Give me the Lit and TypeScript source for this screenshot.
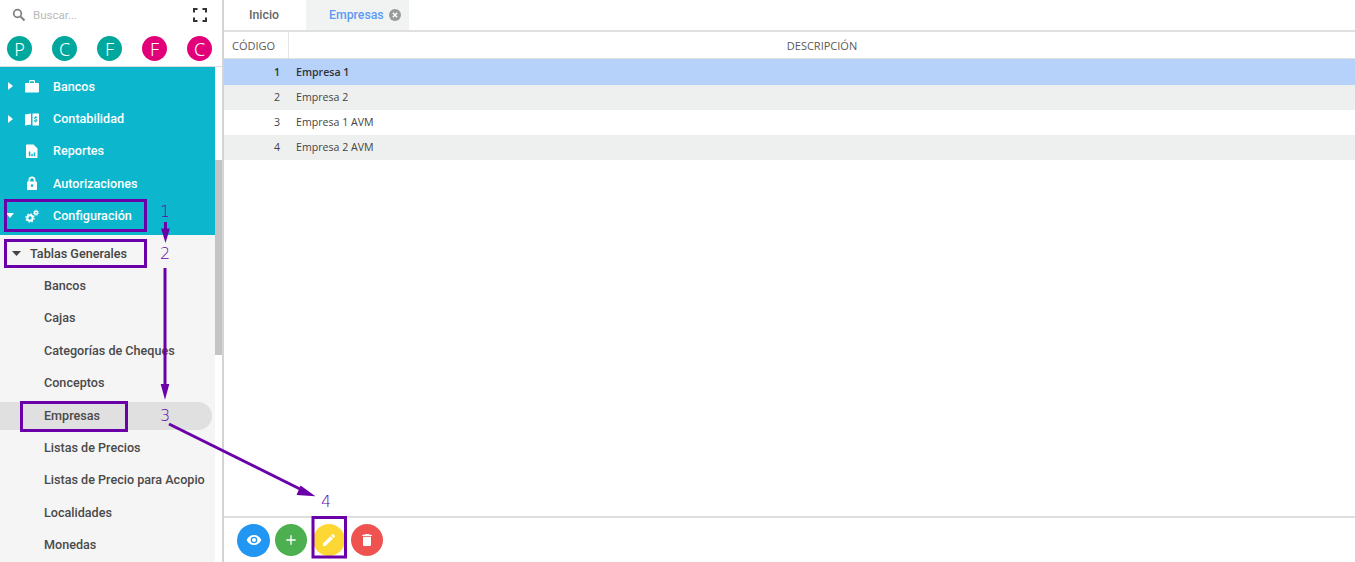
import { LitElement, html, css, svg } from "lit";
import { customElement } from "lit/decorators.js";

const bag = svg`<path d="M2 5h3V3.400C5 2.600 5.600 2 6.400 2h3.200c.8 0 1.400.6 1.400 1.400V5h3c.6 0 1 .4 1 1v7.500c0 .6-.4 1-1 1H2c-.6 0-1-.4-1-1V6c0-.6.400-1 1-1zm4.200-1.800V5h3.600V3.200z" fill-rule="evenodd"/>`;
const book = svg`<path d="M1 3.500 7 2.500v11l-6 1zM8.500 2.500H15v12H8.500zM11.300 5v1c-.8.2-1.200.7-1.200 1.300 0 1.600 2.400 1 2.400 1.800 0 .3-.4.500-.9.500s-1-.2-1.300-.5l-.4.800c.3.300.8.500 1.400.6v1h1v-1c.8-.2 1.200-.7 1.200-1.300 0-1.600-2.400-1.100-2.400-1.800 0-.3.300-.5.800-.5.400 0 .8.100 1.100.4l.4-.8c-.3-.2-.7-.4-1.100-.5V5z" fill-rule="evenodd"/>`;
const report = svg`<path d="M3 1.500h6.500L13.500 5.500V14c0 .6-.4 1-1 1H3c-.6 0-1-.4-1-1V2.500c0-.6.400-1 1-1zM4.800 8.500v4.700h1.500V8.500zm2.500 2.300v2.400h1.500v-2.400zm2.400-1.200v3.600h1.500V9.600z" fill-rule="evenodd"/>`;
const lock = svg`<path d="M4.500 6.500V5a3.500 3.500 0 0 1 7 0v1.500h.5c.6 0 1 .4 1 1V14c0 .6-.4 1-1 1H4c-.6 0-1-.4-1-1V7.500c0-.6.400-1 1-1zm1.700 0h3.600V5a1.800 1.800 0 0 0-3.600 0zM8 9.300a1.300 1.300 0 1 0 0 2.600 1.300 1.300 0 0 0 0-2.600z" fill-rule="evenodd"/>`;
const gears = svg`<g><circle cx="6" cy="10" r="2.700" fill="none" stroke="#fff" stroke-width="2"/><circle cx="6" cy="10" r="4.100" fill="none" stroke="#fff" stroke-width="1.200" stroke-dasharray="1.600 1.620"/><circle cx="12" cy="4.800" r="1.500" fill="none" stroke="#fff" stroke-width="1.400"/><circle cx="12" cy="4.800" r="2.600" fill="none" stroke="#fff" stroke-width=".9" stroke-dasharray="1.100 1.180"/></g>`;

interface Item { label: string; icon: unknown; arrow?: "r" | "d"; }
const teal: Item[] = [
  { label: "Bancos", icon: bag, arrow: "r" },
  { label: "Contabilidad", icon: book, arrow: "r" },
  { label: "Reportes", icon: report },
  { label: "Autorizaciones", icon: lock },
  { label: "Configuración", icon: gears, arrow: "d" },
];
const subs = ["Bancos", "Cajas", "Categorías de Cheques", "Conceptos", "Empresas", "Listas de Precios", "Listas de Precio para Acopio", "Localidades", "Monedas"];
const avatars = [["P", "t"], ["C", "t"], ["F", "t"], ["F", "p"], ["C", "p"]];
const rows = [["1", "Empresa 1"], ["2", "Empresa 2"], ["3", "Empresa 1 AVM"], ["4", "Empresa 2 AVM"]];

@customElement("app-root")
export class AppRoot extends LitElement {
  static styles = css`
    :host { display: block; position: relative; width: 1355px; height: 562px; overflow: hidden; background: #fff; font-family: Roboto, sans-serif; }
    .page { display: flex; height: 562px; }
    .side { width: 224px; flex: none; border-right: 2px solid #d4d4d4; box-sizing: border-box; display: flex; flex-direction: column; position: relative; overflow: hidden; background: #fff; }
    .search { height: 30px; display: flex; align-items: center; padding: 0 15px 0 12px; flex: none; }
    .search .ph { margin-left: 7px; font-size: 11.500px; color: #b9b9b9; flex: 1; }
    .avatars { height: 37px; flex: none; display: flex; justify-content: space-between; padding: 6px 10px 0 7px; box-sizing: border-box; border-bottom: 1px solid #dcdcdc; }
    .av { width: 25px; height: 25px; border-radius: 50%; color: #fff; font-size: 18px; display: flex; align-items: center; justify-content: center; font-family: "Noto Sans", sans-serif; font-weight: 300; line-height: 1; }
    .av.t { background: #00a79d; }
    .av.p { background: #e2007a; }
    .scroller { flex: 1; display: flex; min-height: 0; }
    .menu { width: 215px; flex: none; display: flex; flex-direction: column; background: #f5f5f5; }
    .tealbox { background: #0cb7cd; padding: 3px 0 3.500px; height: 168px; box-sizing: border-box; flex: none; }
    .row { height: 32.400px; display: flex; align-items: center; font-size: 12.600px; font-weight: 500; position: relative; }
    .tealbox .row { color: #fff; }
    .tealbox .ar { width: 10px; margin-left: 5px; height: 10px; display: flex; align-items: center; justify-content: center; flex: none; }
    .tealbox .ic { margin-left: 9px; width: 16px; height: 16px; flex: none; fill: #fff; }
    .tealbox .lb { margin-left: 13px; }
    .sub { padding-top: 1.200px; }
    .sub .head { color: #444; padding-left: 12px; padding-top: 1px; box-sizing: border-box; height: 33px; }
    .sub .head .lb { margin-left: 9px; }
    .sub .it { padding-left: 44px; color: #4a4a4a; height: 32.400px; }
    .sub .it.on { background: #e0e0e0; border-radius: 0 14px 14px 0; margin-right: 3px; height: 28px; margin-top: 3.200px; margin-bottom: 1.200px; }
    .track { width: 7px; flex: none; background: #fff; display: flex; flex-direction: column; }
    .thumb { width: 7px; height: 195px; margin-top: 93px; background: #c4c4c4; }
    .main { flex: 1; display: flex; flex-direction: column; min-width: 0; }
    .tabs { height: 30px; flex: none; display: flex; border-bottom: 2px solid #e0e0e0; font-size: 12.300px; font-weight: 500; }
    .tab { display: flex; align-items: center; color: #666; }
    .tab.a { width: 82px; padding-left: 25px; box-sizing: border-box; }
    .tab.b { width: 103px; background: #f1f3f3; color: #5c9bf5; padding-left: 23px; box-sizing: border-box; gap: 5px; }
    .x { width: 12px; height: 12px; display: block; }
    .grid { flex: 1; min-height: 0; font-family: "Open Sans", "Noto Sans", sans-serif; font-size: 10.600px; color: #444; }
    .g-head { height: 26px; display: flex; border-bottom: 1px solid #e0e0e0; color: #5a5a5a; font-size: 11px; }
    .g-head .c { width: 65px; box-sizing: border-box; border-right: 1px solid #e6e6e6; display: flex; align-items: center; padding-left: 8px; }
    .g-head .d { flex: 1; display: flex; align-items: center; justify-content: center; }
    .g-row { height: 25px; box-sizing: border-box; padding-bottom: 1px; display: flex; align-items: center; }
    .g-row:nth-child(even) { background: #eef0ef; }
    .g-row.sel { background: #b6d1fa; font-weight: 600; color: #333; height: 26px; padding-bottom: 0; }
    .g-row .n { width: 56px; text-align: right; flex: none; }
    .g-row .t { margin-left: 16px; }
    .bar { height: 46px; box-sizing: border-box; flex: none; border-top: 2px solid #dedede; display: flex; align-items: center; padding-left: 13px; }
    .fab { width: 32px; height: 32px; border-radius: 50%; display: flex; align-items: center; justify-content: center; flex: none; }
    .fab svg { width: 16px; height: 16px; fill: #fff; }
    .fab.blue { background: #2196f3; width: 33px; height: 33px; margin-right: 5px; }
    .fab.green { background: #4caf50; margin-right: 6px; }
    .fab.yellow { background: #fdd835; margin-right: 6px; }
    .fab.red { background: #ef5350; }
    .over { position: absolute; left: 0; top: 0; width: 1355px; height: 562px; pointer-events: none; }
    .over text { font-family: "DejaVu Sans", sans-serif; font-size: 16px; fill: #6a00a8; font-weight: 200; }
  `;

  render() {
    return html`
      <div class="page">
        <aside class="side">
          <div class="search">
            <svg width="14" height="14" viewBox="0 0 14 14" fill="none" stroke="#808080" stroke-width="1.700"><circle cx="5.500" cy="5.500" r="3.800"/><path d="M8.500 8.500l4 4" stroke-width="2"/></svg>
            <span class="ph">Buscar...</span>
            <svg width="14" height="14" viewBox="0 0 14 14" fill="none" stroke="#333" stroke-width="2"><path d="M1 4.500V1h3.500M9.500 1H13v3.500M13 9.500V13H9.500M4.500 13H1V9.500"/></svg>
          </div>
          <div class="avatars">
            ${avatars.map(([l, c]) => html`<div class="av ${c}">${l}</div>`)}
          </div>
          <div class="scroller">
            <nav class="menu">
              <div class="tealbox">
                ${teal.map((i) => html`
                  <div class="row">
                    <span class="ar">
                      ${i.arrow === "r"
                        ? html`<svg width="5" height="8" viewBox="0 0 5 8"><path d="M0 0l5 4-5 4z" fill="#fff"/></svg>`
                        : i.arrow === "d"
                          ? html`<svg width="8" height="5" viewBox="0 0 8 5"><path d="M0 0h8L4 5z" fill="#fff"/></svg>`
                          : ""}
                    </span>
                    <svg class="ic" viewBox="0 0 16 16">${i.icon}</svg>
                    <span class="lb">${i.label}</span>
                  </div>`)}
              </div>
              <div class="sub">
                <div class="row head">
                  <svg width="9" height="5" viewBox="0 0 9 5"><path d="M0 0h9L4.500 5z" fill="#444"/></svg>
                  <span class="lb">Tablas Generales</span>
                </div>
                ${subs.map((s) => html`<div class="row it ${s === "Empresas" ? "on" : ""}">${s}</div>`)}
              </div>
            </nav>
            <div class="track"><div class="thumb"></div></div>
          </div>
        </aside>
        <main class="main">
          <div class="tabs">
            <div class="tab a">Inicio</div>
            <div class="tab b">Empresas
              <svg class="x" viewBox="0 0 12 12"><circle cx="6" cy="6" r="6" fill="#9a9a9a"/><path d="M3.800 3.800l4.400 4.400M8.200 3.800l-4.400 4.400" stroke="#fff" stroke-width="1.400"/></svg>
            </div>
          </div>
          <div class="grid">
            <div class="g-head"><div class="c">CÓDIGO</div><div class="d">DESCRIPCIÓN</div></div>
            <div>
              ${rows.map((r, i) => html`<div class="g-row ${i === 0 ? "sel" : ""}"><span class="n">${r[0]}</span><span class="t">${r[1]}</span></div>`)}
            </div>
          </div>
          <div class="bar">
            <div class="fab blue"><svg viewBox="0 0 24 24"><path d="M12 4.500C7 4.500 2.700 7.600 1 12c1.700 4.400 6 7.500 11 7.500s9.300-3.100 11-7.500c-1.700-4.400-6-7.500-11-7.500zM12 17a5 5 0 1 1 0-10 5 5 0 0 1 0 10zm0-8a3 3 0 1 0 0 6 3 3 0 0 0 0-6z"/></svg></div>
            <div class="fab green"><svg viewBox="0 0 24 24"><path d="M19 13h-6v6h-2v-6H5v-2h6V5h2v6h6z"/></svg></div>
            <div class="fab yellow"><svg viewBox="0 0 24 24"><path d="M3 17.250V21h3.750L17.810 9.940l-3.750-3.750zM20.710 7.040a1 1 0 0 0 0-1.410l-2.340-2.340a1 1 0 0 0-1.410 0l-1.830 1.830 3.750 3.750z"/></svg></div>
            <div class="fab red"><svg viewBox="0 0 24 24"><path d="M6 19c0 1.100.9 2 2 2h8c1.100 0 2-.9 2-2V7H6zM19 4h-3.500l-1-1h-5l-1 1H5v2h14z"/></svg></div>
          </div>
        </main>
      </div>
      <svg class="over" viewBox="0 0 1355 562">
        <g fill="none" stroke="#6a00a8" stroke-width="3">
          <rect x="5.500" y="200.500" width="140" height="30"/>
          <rect x="5.500" y="240.500" width="140" height="26"/>
          <rect x="21.500" y="402.500" width="105" height="28"/>
          <rect x="313" y="517.500" width="32.500" height="39.500"/>
        </g>
        <g stroke="#6a00a8" stroke-width="3" fill="#6a00a8">
          <path d="M165.500 222V236"/>
          <path d="M162.500 229.500h6l-3 10z" stroke-width="2"/>
          <path d="M165 268V390"/>
          <path d="M162 385h6l-3 11z" stroke-width="2"/>
          <path d="M169 424L306 492"/>
          <path d="M301 487l11 8-14-1z" stroke-width="2"/>
        </g>
        <text x="160" y="217">1</text>
        <text x="160" y="259">2</text>
        <text x="160" y="421">3</text>
        <text x="321" y="507">4</text>
      </svg>
    `;
  }
}
